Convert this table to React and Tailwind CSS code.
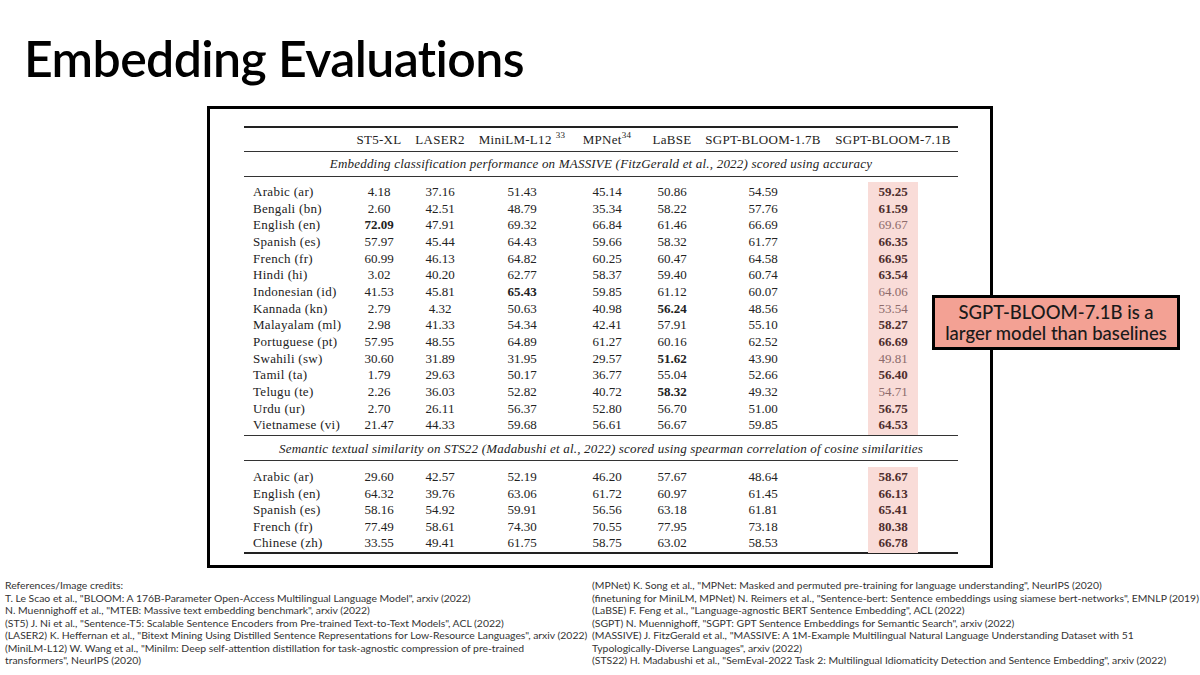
import { clsx } from 'clsx';

// values ending in * are bold in the paper's table
const massive = [
    ['Arabic (ar)', '4.18', '37.16', '51.43', '45.14', '50.86', '54.59', '59.25*'],
    ['Bengali (bn)', '2.60', '42.51', '48.79', '35.34', '58.22', '57.76', '61.59*'],
    ['English (en)', '72.09*', '47.91', '69.32', '66.84', '61.46', '66.69', '69.67'],
    ['Spanish (es)', '57.97', '45.44', '64.43', '59.66', '58.32', '61.77', '66.35*'],
    ['French (fr)', '60.99', '46.13', '64.82', '60.25', '60.47', '64.58', '66.95*'],
    ['Hindi (hi)', '3.02', '40.20', '62.77', '58.37', '59.40', '60.74', '63.54*'],
    ['Indonesian (id)', '41.53', '45.81', '65.43*', '59.85', '61.12', '60.07', '64.06'],
    ['Kannada (kn)', '2.79', '4.32', '50.63', '40.98', '56.24*', '48.56', '53.54'],
    ['Malayalam (ml)', '2.98', '41.33', '54.34', '42.41', '57.91', '55.10', '58.27*'],
    ['Portuguese (pt)', '57.95', '48.55', '64.89', '61.27', '60.16', '62.52', '66.69*'],
    ['Swahili (sw)', '30.60', '31.89', '31.95', '29.57', '51.62*', '43.90', '49.81'],
    ['Tamil (ta)', '1.79', '29.63', '50.17', '36.77', '55.04', '52.66', '56.40*'],
    ['Telugu (te)', '2.26', '36.03', '52.82', '40.72', '58.32*', '49.32', '54.71'],
    ['Urdu (ur)', '2.70', '26.11', '56.37', '52.80', '56.70', '51.00', '56.75*'],
    ['Vietnamese (vi)', '21.47', '44.33', '59.68', '56.61', '56.67', '59.85', '64.53*'],
];

const sts = [
    ['Arabic (ar)', '29.60', '42.57', '52.19', '46.20', '57.67', '48.64', '58.67*'],
    ['English (en)', '64.32', '39.76', '63.06', '61.72', '60.97', '61.45', '66.13*'],
    ['Spanish (es)', '58.16', '54.92', '59.91', '56.56', '63.18', '61.81', '65.41*'],
    ['French (fr)', '77.49', '58.61', '74.30', '70.55', '77.95', '73.18', '80.38*'],
    ['Chinese (zh)', '33.55', '49.41', '61.75', '58.75', '63.02', '58.53', '66.78*'],
];

const refsLeft = [
    'References/Image credits:',
    'T. Le Scao et al., "BLOOM: A 176B-Parameter Open-Access Multilingual Language Model", arxiv (2022)',
    'N. Muennighoff et al., "MTEB: Massive text embedding benchmark", arxiv (2022)',
    '(ST5) J. Ni et al., "Sentence-T5: Scalable Sentence Encoders from Pre-trained Text-to-Text Models", ACL (2022)',
    '(LASER2) K. Heffernan et al., "Bitext Mining Using Distilled Sentence Representations for Low-Resource Languages", arxiv (2022)',
    '(MiniLM-L12) W. Wang et al., "Minilm: Deep self-attention distillation for task-agnostic compression of pre-trained',
    'transformers", NeurIPS (2020)',
];

const refsRight = [
    '(MPNet) K. Song et al., "MPNet: Masked and permuted pre-training for language understanding", NeurIPS (2020)',
    '(finetuning for MiniLM, MPNet) N. Reimers et al., "Sentence-bert: Sentence embeddings using siamese bert-networks", EMNLP (2019)',
    '(LaBSE) F. Feng et al., "Language-agnostic BERT Sentence Embedding", ACL (2022)',
    '(SGPT) N. Muennighoff, "SGPT: GPT Sentence Embeddings for Semantic Search", arxiv (2022)',
    '(MASSIVE) J. FitzGerald et al., "MASSIVE: A 1M-Example Multilingual Natural Language Understanding Dataset with 51',
    'Typologically-Diverse Languages", arxiv (2022)',
    '(STS22) H. Madabushi et al., "SemEval-2022 Task 2: Multilingual Idiomaticity Detection and Sentence Embedding", arxiv (2022)',
];

const cols = "grid grid-cols-[104px_62px_60px_104px_66px_64px_118px_18px_106px_12px]";

function Cell({ value }) {
    const bold = value.endsWith('*');
    return (
        <div className={clsx("flex items-center justify-center whitespace-nowrap", bold && "font-bold")}>
            {bold ? value.slice(0, -1) : value}
        </div>
    );
}

function Row({ row }) {
    const [label, ...vals] = row;
    const last = vals[6];
    const lastBold = last.endsWith('*');
    return (
        <div className={clsx(cols, "h-[16.67px]")}>
            <div className="flex items-center pl-[9px] whitespace-nowrap tracking-[0.3px]">{label}</div>
            {vals.slice(0, 6).map((v, i) => <Cell key={i} value={v} />)}
            <div />
            <div className="flex justify-center">
                <div className={clsx(
                    "w-[50px] h-full bg-[#f9dcd8] flex items-center justify-center",
                    lastBold ? "font-bold text-[#4e2d2d]" : "text-[#8d6b6b]"
                )}>
                    {lastBold ? last.slice(0, -1) : last}
                </div>
            </div>
            <div />
        </div>
    );
}

function Head({ children }) {
    return <div className="flex items-center justify-center whitespace-nowrap">{children}</div>;
}

export default function App() {
    return (
        <div className="relative w-[1200px] h-[675px] bg-white overflow-hidden flex flex-col font-['Lato',sans-serif] text-black">
            {/* Title */}
            <div className="h-[106px] pl-[24px] pt-[28px]">
                <h1 className="text-[50px] leading-[60px] font-semibold tracking-[-0.6px]">Embedding Evaluations</h1>
            </div>

            {/* Table screenshot */}
            <div className="ml-[207px] w-[786px] h-[462px] border-[3px] border-black bg-white pl-[34px] pt-[17px] font-['Liberation_Serif',serif] text-[13px] text-[#222]">
                <div className="w-[714px]">
                    <div className="h-[2px] bg-[#222]" />
                    <div className={clsx(cols, "h-[23px] tracking-[0.3px]")}>
                        <div />
                        <Head>ST5-XL</Head>
                        <Head>LASER2</Head>
                        <Head>MiniLM-L12<sup className="text-[9px] ml-[4px]">33</sup></Head>
                        <Head>MPNet<sup className="text-[9px]">34</sup></Head>
                        <Head>LaBSE</Head>
                        <Head>SGPT-BLOOM-1.7B</Head>
                        <div />
                        <Head>SGPT-BLOOM-7.1B</Head>
                        <div />
                    </div>
                    <div className="h-px bg-[#333]" />
                    <div className="h-[24px] flex items-center justify-center italic tracking-[0.2px] whitespace-nowrap">
                        Embedding classification performance on MASSIVE (FitzGerald et al., 2022) scored using accuracy
                    </div>
                    <div className="h-px bg-[#333]" />
                    <div className="pt-[5px] pb-[3px]">
                        {massive.map((r) => <Row key={r[0]} row={r} />)}
                    </div>
                    <div className="h-px bg-[#333]" />
                    <div className="h-[24px] pt-[2px] flex items-center justify-center italic tracking-[0.2px] whitespace-nowrap">
                        Semantic textual similarity on STS22 (Madabushi et al., 2022) scored using spearman correlation of cosine similarities
                    </div>
                    <div className="h-px bg-[#333]" />
                    <div className="pt-[6px] pb-[1.5px]">
                        {sts.map((r) => <Row key={r[0]} row={r} />)}
                    </div>
                    <div className="h-[2px] bg-[#222]" />
                </div>
            </div>

            {/* References */}
            <div className="grid grid-cols-[587px_1fr] pl-[5px] pt-[11px] text-[10.4px] leading-[12.5px] text-[#333]">
                <div>
                    {refsLeft.map((t) => <div key={t} className="whitespace-nowrap">{t}</div>)}
                </div>
                <div>
                    {refsRight.map((t) => <div key={t} className="whitespace-nowrap">{t}</div>)}
                </div>
            </div>

            {/* Callout */}
            <div className="absolute left-[932px] top-[295px] w-[248px] h-[55px] border-[3px] border-black bg-[#f3a194] flex flex-col items-center justify-center text-[18.5px] leading-[21px] font-medium text-[#1a1a1a]">
                <span>SGPT-BLOOM-7.1B is a</span>
                <span>larger model than baselines</span>
            </div>
        </div>
    );
}
